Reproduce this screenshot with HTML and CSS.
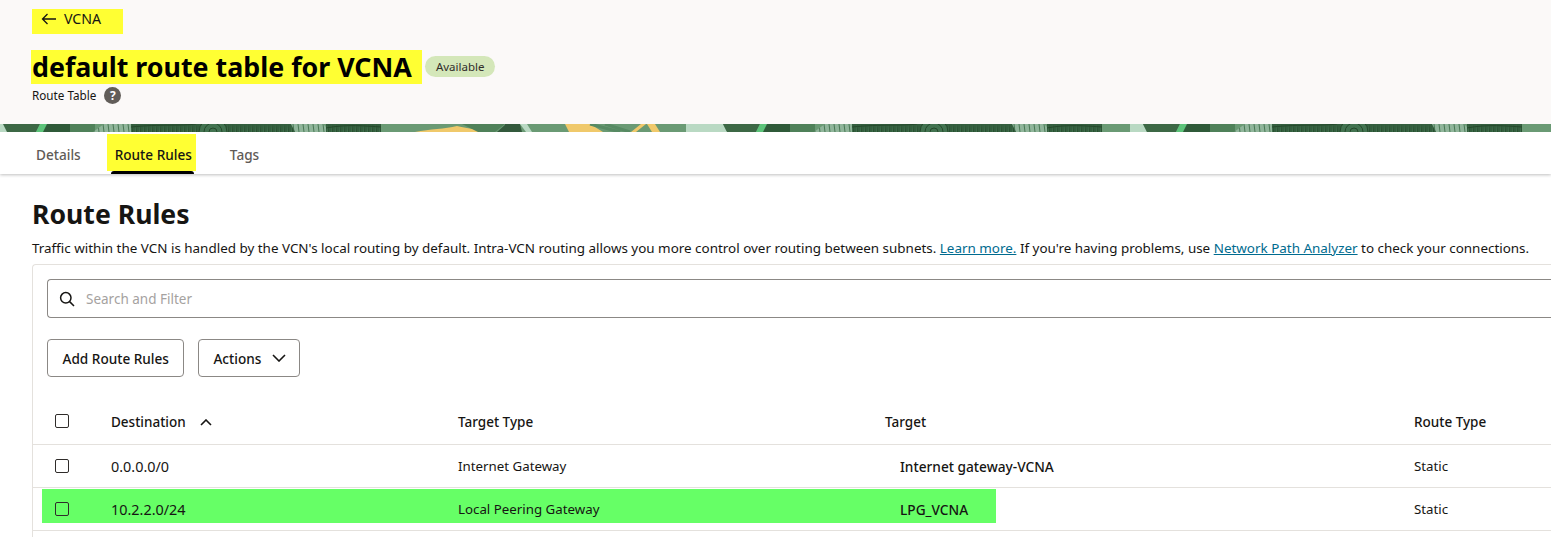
FILE: index.html
```html
<!DOCTYPE html>
<html lang="en">
<head>
<meta charset="UTF-8" />
<meta name="viewport" content="width=device-width, initial-scale=1" />
<title>default route table for VCNA</title>
<link rel="stylesheet" href="styles.css">
</head>
<body>

<header class="page-head">
  <a class="back-link" href="#">
    <svg width="16" height="12" viewBox="0 0 16 12" fill="none" stroke="#161513" stroke-width="1.3"><path d="M15 6H1.5M6.5 1 1.5 6l5 5"/></svg>
    <span>VCNA</span>
  </a>
  <div class="title-row">
    <h1 class="title">default route table for VCNA</h1>
    <span class="badge">Available</span>
  </div>
  <div class="subtitle">
    <span>Route Table</span>
    <span class="help">?</span>
  </div>
</header>

<!-- banner strip, drawn by hand -->
<svg class="banner" width="1551" height="8" viewBox="0 0 1551 8" preserveAspectRatio="none">
  <defs>
    <pattern id="print" width="4" height="8" patternUnits="userSpaceOnUse">
      <rect width="4" height="8" fill="#427350"/>
      <path d="M1 0V8M3 0 3.4 8" stroke="#24492b" stroke-width="1"/>
    </pattern>
    <pattern id="printLight" width="5" height="8" patternUnits="userSpaceOnUse">
      <rect width="5" height="8" fill="#8fb59a"/>
      <path d="M2 0 3 8" stroke="#3f6f4b" stroke-width=".9"/>
    </pattern>
    <g id="prints">
      <path d="M12 8 23 0H58L56 8Z" fill="url(#printLight)"/>
      <rect x="50" width="164" height="8" fill="url(#print)"/>
      <path d="M118 8a14 14 0 0 1 28 0M123 8a9 9 0 0 1 18 0M128 8a4 4 0 0 1 8 0" fill="#427350" stroke="#24492b"/>
      <path d="M50 3C80 0 100 2 115 0" fill="none" stroke="#24492b"/>
      <path d="M210 0H242L250 8H214Z" fill="url(#printLight)"/>
      <rect x="245" width="55" height="8" fill="url(#print)"/>
      <path d="M245 4C265 0 285 2 300 3" fill="none" stroke="#24492b"/>
    </g>
    <g id="leaf">
      <path d="M0 0H13L17 8H0Z" fill="#b9d9c3"/>
      <path d="M13 0H50L46 8H17Z" fill="#3c6845"/>
      <path d="M52 0H80V8H48Z" fill="#2f5a39"/>
      <path d="M50 0H57L53 8H46Z" fill="#5cc47a"/>
      <rect x="80" width="25" height="8" fill="#4f8159"/>
    </g>
  </defs>
  <rect width="1551" height="8" fill="#6a9a74"/>
  <path d="M0 0H4L8 8H0Z" fill="#b9d9c3"/>
  <use href="#leaf" x="-10"/>
  <use href="#prints" x="81"/>
  <path d="M415 8C430 5 445 5 457 2 465 4 480 6 490 8Z" fill="#f0c96b"/>
  <path d="M462 0H505L495 8H478Z" fill="#4f8159"/>
  <path d="M497 8 506 0H512L516 8Z" fill="#33593c"/>
  <path d="M505 0H520L522 8H505Z" fill="#33593c"/>
  <path d="M520 0H527L532 8H526Z" fill="#b9d9c3"/>
  <path d="M565 0H590L603 8H569Z" fill="#f0c96b"/>
  <path d="M590 0 620 8M605 0 630 8" stroke="#578a63" stroke-width="3"/>
  <path d="M641 0H646L636 8H631Z" fill="#f0c96b"/>
  <path d="M647 0H655L660 8H652Z" fill="#f0c96b"/>
  <use href="#leaf" x="710"/>
  <path d="M686 0H715L727 8H686Z" fill="#b9d9c3"/>
  <use href="#prints" x="802"/>
  <use href="#leaf" x="1130"/>
  <use href="#prints" x="1222"/>
</svg>

<nav class="tabs">
  <a class="tab" href="#">Details</a>
  <a class="tab tab-active" href="#">Route Rules</a>
  <a class="tab" href="#">Tags</a>
</nav>

<main class="content">
  <h2 class="heading">Route Rules</h2>
  <p class="intro">Traffic within the VCN is handled by the VCN's local routing by default. Intra-VCN routing allows you more control over routing between subnets. <a href="#">Learn more.</a> If you're having problems, use <a href="#">Network Path Analyzer</a> to check your connections.</p>

  <section class="panel">
    <div class="search">
      <svg width="16" height="16" viewBox="0 0 16 16" fill="none" stroke="#161513" stroke-width="1.5"><circle cx="6.8" cy="6.8" r="5.2"/><path d="m10.6 10.6 4.4 4.4"/></svg>
      <span>Search and Filter</span>
    </div>

    <div class="toolbar">
      <button class="btn">Add Route Rules</button>
      <button class="btn btn-menu">Actions
        <svg width="14" height="8" viewBox="0 0 14 8" fill="none" stroke="#161513" stroke-width="1.6"><path d="m1 1 6 6 6-6"/></svg>
      </button>
    </div>

    <div class="row row-head">
      <span class="check"></span>
      <span class="sort">Destination
        <svg width="12" height="7" viewBox="0 0 12 7" fill="none" stroke="#161513" stroke-width="1.6"><path d="m1 6 5-5 5 5"/></svg>
      </span>
      <span>Target Type</span>
      <span>Target</span>
      <span>Route Type</span>
    </div>
    <div class="row">
      <span class="check"></span>
      <span class="cidr">0.0.0.0/0</span>
      <span>Internet Gateway</span>
      <span class="target">Internet gateway-VCNA</span>
      <span>Static</span>
    </div>
    <div class="row row-marked">
      <span class="check"></span>
      <span class="cidr">10.2.2.0/24</span>
      <span>Local Peering Gateway</span>
      <span class="target">LPG_VCNA</span>
      <span>Static</span>
    </div>
  </section>
</main>

</body>
</html>
```

FILE: styles.css
```css
html, body { margin: 0; height: 100%; overflow: hidden; }
body { font-family: "Noto Sans", "Open Sans", sans-serif; font-size: 13.3px; color: #161513; background: #fff; }
a { color: inherit; text-decoration: none; }

.page-head { height: 124px; box-sizing: border-box; padding: 9px 0 0 32px; background: #fbf9f8; }
.back-link { display: flex; align-items: center; gap: 7px; width: 91px; height: 25px; padding: 0 0 6px 9px; box-sizing: border-box; background: #ffff33; font-size: 14.2px; }
.title-row { display: flex; align-items: center; gap: 3px; margin: 16px 0 0 -1px; }
.title { margin: 0; padding: 0 10px 0 1px; height: 34px; line-height: 33px; background: #ffff33; font-size: 26.8px; font-weight: 700; color: #000; white-space: nowrap; }
.badge { display: flex; align-items: center; height: 21px; padding: 0 11px; margin-top: -1px; border-radius: 11px; background: #d4e7b9; font-size: 11.5px; color: #312d2a; }
.subtitle { display: flex; align-items: center; gap: 8px; margin-top: 1px; font-size: 11.7px; height: 20px; }
.help { display: flex; align-items: center; justify-content: center; width: 17px; height: 17px; border-radius: 50%; background: #615d59; color: #fff; font-size: 12px; font-weight: 700; }

.banner { display: block; }

.tabs { display: flex; height: 42px; padding-left: 36px; box-shadow: 0 1px 3px rgba(0,0,0,.25); }
.tab { display: flex; align-items: center; height: 37px; box-sizing: border-box; margin-top: 2px; padding-top: 4px; font-size: 13.6px; font-weight: 500; color: #5f5b57; }
.tab-active { position: relative; margin: 2px 34px 0 26px; padding: 4px 4px 0 8px; background: #ffff33; color: #161513; }
.tab-active::after { content: ""; position: absolute; top: 100%; left: 4px; right: 2px; height: 3px; background: #000; border-radius: 3px 3px 0 0; }

.content { padding-left: 32px; }
.heading { margin: 22px 0 0; font-size: 26.6px; line-height: 36px; font-weight: 700; }
.intro { margin: 6px 0 0; font-size: 13.43px; line-height: 20px; white-space: nowrap; }
.intro a { color: #006b8f; text-decoration: underline; }

.panel { height: 273px; margin-top: 6px; padding-top: 14px; box-sizing: border-box; border: 1px solid #e4e1dd; border-width: 1px 0 0 1px; border-radius: 4px 0 0 0; }
.search { display: flex; align-items: center; gap: 11px; height: 39px; box-sizing: border-box; margin-left: 14px; padding-left: 11px; border: 1px solid #8b8885; border-right: 0; border-radius: 4px 0 0 4px; color: #a5a29f; font-size: 13.5px; }
.toolbar { display: flex; gap: 14px; margin: 21px 0 0 14px; }
.btn { display: flex; align-items: center; height: 38px; padding: 0 14.5px; background: #fff; border: 1px solid #8b8885; border-radius: 4px; font: 500 13.6px "Noto Sans", sans-serif; color: #161513; }
.btn-menu { gap: 11px; padding: 0 13px 0 14px; }

.row { display: grid; grid-template-columns: 56px 347px 427px 529px 1fr; align-items: center; height: 43px; padding-left: 22px; box-sizing: border-box; border-bottom: 1px solid #e4e1dd; }
.row-head { height: 44px; margin-top: 24px; padding-bottom: 3px; font-weight: 500; font-size: 13.5px; }
.row-head > span:not(.check) { padding-top: 2px; }
.row-marked { background: linear-gradient(#66ff66, #66ff66) no-repeat 9px 1px / 954px 34px; }
.check { display: block; width: 14px; height: 14px; box-sizing: border-box; border: 1.5px solid #2f2c2a; border-radius: 2px; }
.sort { display: flex; align-items: center; gap: 14px; }
.cidr { font-size: 14.4px; }
.target { padding-left: 15px; font-size: 13.7px; font-weight: 500; }
```
